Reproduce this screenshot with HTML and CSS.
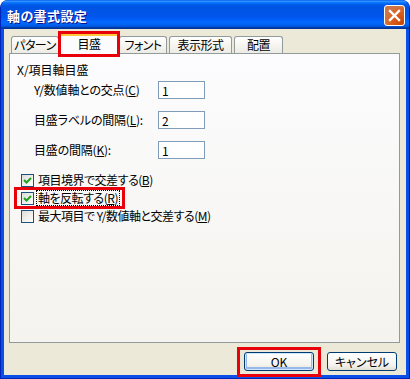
FILE: index.html
```html
<!DOCTYPE html>
<html>
<head>
    <meta charset="UTF-8">
    <title>軸の書式設定</title>
    <link rel="stylesheet" href="styles.css">
</head>
<body>
    <div class="window">
        <div class="titlebar">
            <span class="title">軸の書式設定</span>
            <button class="close-btn" aria-label="閉じる">
                <svg width="13" height="13" viewBox="0 0 13 13">
                    <path d="M2 2 L11 11 M11 2 L2 11" stroke="#fff" stroke-width="2.4" stroke-linecap="square"/>
                </svg>
            </button>
        </div>

        <div class="client">
            <!-- Tabs -->
            <div class="tabs">
                <div class="tab">パターン</div>
                <div class="tab active">目盛</div>
                <div class="tab">フォント</div>
                <div class="tab">表示形式</div>
                <div class="tab">配置</div>
            </div>

            <div class="panel">
                <div class="group-title">X/項目軸目盛</div>
                <div class="field-grid">
                    <label for="cross">Y/数値軸との交点(<u>C</u>)</label>
                    <input type="text" id="cross" value="1">
                    <label for="labelGap">目盛ラベルの間隔(<u>L</u>):</label>
                    <input type="text" id="labelGap" value="2">
                    <label for="tickGap">目盛の間隔(<u>K</u>):</label>
                    <input type="text" id="tickGap" value="1">
                </div>

                <div class="check-list">
                    <label class="check-row">
                        <span class="checkbox checked">
                            <svg width="11" height="11" viewBox="0 0 11 11"><path d="M2 5 L4.5 7.5 L9 3" fill="none" stroke="#21a121" stroke-width="2"/></svg>
                        </span>
                        <span class="check-text">項目境界で交差する(<u>B</u>)</span>
                    </label>
                    <label class="check-row marked">
                        <span class="checkbox checked">
                            <svg width="11" height="11" viewBox="0 0 11 11"><path d="M2 5 L4.5 7.5 L9 3" fill="none" stroke="#21a121" stroke-width="2"/></svg>
                        </span>
                        <span class="check-text focused">軸を反転する(<u>R</u>)</span>
                    </label>
                    <label class="check-row">
                        <span class="checkbox"></span>
                        <span class="check-text">最大項目で Y/数値軸と交差する(<u>M</u>)</span>
                    </label>
                </div>
            </div>

            <div class="buttons">
                <button class="btn default marked">OK</button>
                <button class="btn">キャンセル</button>
            </div>
        </div>
    </div>
</body>
</html>
```

FILE: styles.css
```css
body {
    margin: 0;
    background: #fff;
    font-family: "Noto Sans CJK JP", "Liberation Sans", sans-serif;
    font-size: 12px;
    font-feature-settings: "palt";
    color: #000;
}

.window {
    width: 410px;
    height: 379px;
    box-sizing: border-box;
    display: flex;
    flex-direction: column;
    background: #0c4fe6;
    border: 1px solid #0024b8;
    border-top: none;
    border-radius: 8px 8px 0 0;
    overflow: hidden;
}

.titlebar {
    height: 29px;
    flex: none;
    margin: 0 -1px;
    display: flex;
    align-items: center;
    justify-content: space-between;
    padding: 0 5px 0 7px;
    background: linear-gradient(to bottom, #0058ee 0%, #3593ff 4%, #288eff 6%, #127dff 8%, #036ffc 10%, #0262ee 14%, #0057e5 20%, #0054e3 24%, #0055eb 56%, #005bf5 66%, #026afe 76%, #0062ef 86%, #0052d6 92%, #0040ab 94%, #003092 100%);
    border-radius: 8px 8px 0 0;
}

.title {
    color: #fff;
    font-weight: 700;
    font-size: 13px;
    letter-spacing: 0.4px;
    text-shadow: 1px 1px #0f1089;
    margin-top: 1px;
}

.close-btn {
    width: 21px;
    height: 21px;
    padding: 0;
    border: 1px solid #fff;
    border-radius: 3px;
    background: radial-gradient(circle at 90% 90%, #cc4600 0%, #dc6527 55%, #cd7546 70%), #e0553a;
    display: flex;
    align-items: center;
    justify-content: center;
    margin-top: 1px;
}

.client {
    flex: 1;
    margin: 0 3px 3px;
    background: #ece9d8;
    display: flex;
    flex-direction: column;
}

/* Tabs */
.tabs {
    display: flex;
    align-items: flex-end;
    gap: 2px;
    padding: 4px 0 0 7px;
    height: 20px;
    position: relative;
    z-index: 1;
}

.tab {
    height: 17px;
    box-sizing: border-box;
    display: flex;
    align-items: center;
    justify-content: center;
    border: 1px solid #919b9c;
    border-bottom: none;
    border-radius: 3px 3px 0 0;
    background: linear-gradient(to bottom, #fff 0%, #f4f3ee 60%, #ecebe6 100%);
    line-height: 14px;
    letter-spacing: -0.5px;
    white-space: nowrap;
}

/* tab widths as in the original dialog */
.tab:nth-child(1) { width: 48px; }
.tab:nth-child(3) { width: 48px; }
.tab:nth-child(4) { width: 63px; }
.tab:nth-child(5) { width: 49px; }

.tab.active {
    position: relative;
    width: 60px;
    height: 21px;
    margin: 0 -2px -1px;
    background: #fcfcfe;
    border-top: 3px solid #ffc83c;
    padding-bottom: 2px;
}

.tab.active::before {
    content: "";
    position: absolute;
    left: -1px;
    right: -1px;
    top: -3px;
    height: 1px;
    background: #e68b2c;
    border-radius: 3px 3px 0 0;
}

.tab.active::after {
    content: "";
    position: absolute;
    left: -2px;
    right: -2px;
    top: -5px;
    bottom: -3px;
    border: 3px solid #e8000b;
}

.panel {
    height: 290px;
    box-sizing: border-box;
    margin: 0 6px 0 5px;
    padding: 9px 7px;
    border: 1px solid #919b9c;
    background: linear-gradient(to bottom, #fcfcfe, #f4f3ee);
    line-height: 14px;
}

.group-title {
    height: 14px;
}

.field-grid {
    display: grid;
    grid-template-columns: 124px 47px;
    grid-auto-rows: 18px;
    row-gap: 12px;
    align-items: center;
    margin: 4px 0 0 17px;
}

.field-grid label {
    letter-spacing: -0.2px;
}

.field-grid input {
    width: 47px;
    height: 18px;
    box-sizing: border-box;
    border: 1px solid #7f9db9;
    padding: 0 3px;
    font: inherit;
    font-size: 12px;
    background: #fff;
}

.check-list {
    display: flex;
    flex-direction: column;
    align-items: flex-start;
    margin-top: 12px;
}

.check-row {
    height: 18px;
    display: inline-flex;
    align-items: center;
    gap: 2px;
    position: relative;
    margin-left: 4px;
}

.checkbox {
    width: 13px;
    height: 13px;
    box-sizing: border-box;
    border: 1px solid #1c5180;
    background: linear-gradient(135deg, #dcdcd7, #fff);
    display: flex;
    align-items: center;
    justify-content: center;
}

.check-text {
    padding: 0 1px;
    border: 1px dotted transparent;
    letter-spacing: -0.5px;
}

.check-text.focused {
    border-color: #000;
}

.check-row.marked::after {
    content: "";
    position: absolute;
    left: -7px;
    right: -5px;
    top: -2px;
    bottom: -2px;
    border: 3px solid #e8000b;
}

.buttons {
    display: flex;
    justify-content: flex-end;
    gap: 13px;
    margin: 9px 9px 0 0;
}

.btn {
    width: 70px;
    height: 19px;
    padding: 0;
    border: 1px solid #003c74;
    border-radius: 3px;
    background: linear-gradient(to bottom, #fff 0%, #f4f3ee 70%, #e3dfd4 100%);
    font: inherit;
    font-size: 12px;
    line-height: 14px;
    color: #000;
    position: relative;
}

.btn.default {
    box-shadow: inset 0 0 0 1px #cee7ff, inset 0 -1px 0 2px #98b8ea;
}

.btn.marked::after {
    content: "";
    position: absolute;
    left: -8px;
    right: -8px;
    top: -6px;
    bottom: -7px;
    border: 3px solid #e8000b;
}
```
